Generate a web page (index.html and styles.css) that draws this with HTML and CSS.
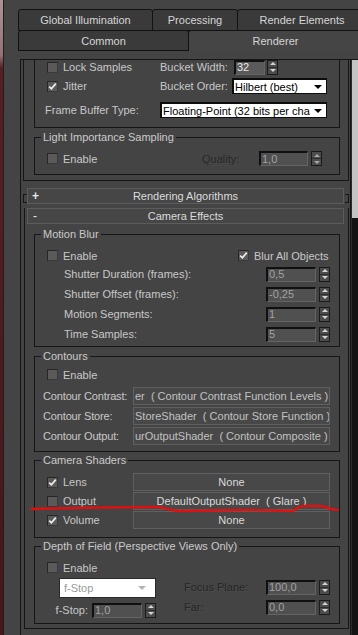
FILE: index.html
```html
<!DOCTYPE html>
<html>
<head>
<meta charset="utf-8">
<link rel="stylesheet" href="styles.css">
</head>
<body>
<div class="edge"></div>
<div class="app">
  <div class="tabs">
    <div class="tabrow row1">
      <div class="tab t-gi">Global Illumination</div>
      <div class="tab t-proc">Processing</div>
      <div class="tab t-re">Render Elements</div>
    </div>
    <div class="tabrow row2">
      <div class="tab t-common">Common</div>
      <div class="tab t-renderer sel">Renderer</div>
    </div>
  </div>
  <div class="scroll">
    <div class="content">
      <div class="rollout first">
        <div class="group cut">
          <div class="srow r1">
            <div class="lcell"><span class="chk"></span><span class="lbl">Lock Samples</span></div>
            <div class="rcell"><span class="lbl w74">Bucket Width:</span><span class="num on w31">32</span><span class="spin"><i class="up"></i><i class="dn"></i></span></div>
          </div>
          <div class="srow r2">
            <div class="lcell"><span class="chk on"><svg width="9" height="9" viewBox="0 0 9 9"><path d="M1.2 4.6 L3.4 6.8 L7.8 1.6" stroke="#eeeeee" stroke-width="1.7" fill="none"/></svg></span><span class="lbl">Jitter</span></div>
            <div class="rcell"><span class="lbl w72">Bucket Order:</span><span class="dd w95"><span class="ddt">Hilbert (best)</span></span></div>
          </div>
          <div class="srow r3">
            <div class="lcell"><span class="lbl pl10">Frame Buffer Type:</span></div>
            <div class="rcell"><span class="dd w167"><span class="ddt">Floating-Point (32 bits per cha</span></span></div>
          </div>
        </div>
        <fieldset class="group lis">
          <legend>Light Importance Sampling</legend>
          <div class="lisrow">
            <div class="lcell w167"><span class="chk"></span><span class="lbl">Enable</span></div>
            <span class="lbl dis w57">Quality:</span><span class="num w49">1,0</span><span class="spin dim"><i class="up"></i><i class="dn"></i></span>
          </div>
        </fieldset>
      </div>

      <div class="rhead collapsed"><span class="sign">+</span><span class="rtitle">Rendering Algorithms</span><span></span></div>

      <div class="rollout open">
        <div class="rhead"><span class="sign minus">-</span><span class="rtitle">Camera Effects</span><span></span></div>

        <fieldset class="group mb">
          <legend>Motion Blur</legend>
          <div class="erow">
            <div class="lcell w203"><span class="chk"></span><span class="lbl">Enable</span></div>
            <span class="chk on"><svg width="9" height="9" viewBox="0 0 9 9"><path d="M1.2 4.6 L3.4 6.8 L7.8 1.6" stroke="#eeeeee" stroke-width="1.7" fill="none"/></svg></span><span class="lbl">Blur All Objects</span>
          </div>
          <div class="nrow"><span class="lbl grow">Shutter Duration (frames):</span><span class="num w50">0,5</span><span class="spin"><i class="up"></i><i class="dn"></i></span></div>
          <div class="nrow"><span class="lbl grow">Shutter Offset (frames):</span><span class="num w50">-0,25</span><span class="spin"><i class="up"></i><i class="dn"></i></span></div>
          <div class="nrow"><span class="lbl grow">Motion Segments:</span><span class="num w50">1</span><span class="spin"><i class="up"></i><i class="dn"></i></span></div>
          <div class="nrow"><span class="lbl grow">Time Samples:</span><span class="num w50">5</span><span class="spin"><i class="up"></i><i class="dn"></i></span></div>
        </fieldset>

        <fieldset class="group ct">
          <legend>Contours</legend>
          <div class="erow"><span class="chk"></span><span class="lbl">Enable</span></div>
          <div class="brow"><span class="lbl w90">Contour Contrast:</span><span class="btn clip">er&nbsp;&nbsp;( Contour Contrast Function Levels )</span></div>
          <div class="brow"><span class="lbl w90">Contour Store:</span><span class="btn clip">StoreShader&nbsp;&nbsp;( Contour Store Function )</span></div>
          <div class="brow"><span class="lbl w90">Contour Output:</span><span class="btn clip">urOutputShader&nbsp;&nbsp;( Contour Composite )</span></div>
        </fieldset>

        <fieldset class="group cs">
          <legend>Camera Shaders</legend>
          <div class="crow"><div class="lcell w98"><span class="chk on"><svg width="9" height="9" viewBox="0 0 9 9"><path d="M1.2 4.6 L3.4 6.8 L7.8 1.6" stroke="#eeeeee" stroke-width="1.7" fill="none"/></svg></span><span class="lbl">Lens</span></div><span class="btn">None</span></div>
          <div class="crow"><div class="lcell w98"><span class="chk"></span><span class="lbl">Output</span></div><span class="btn">DefaultOutputShader&nbsp;&nbsp;( Glare )</span></div>
          <div class="crow"><div class="lcell w98"><span class="chk on"><svg width="9" height="9" viewBox="0 0 9 9"><path d="M1.2 4.6 L3.4 6.8 L7.8 1.6" stroke="#eeeeee" stroke-width="1.7" fill="none"/></svg></span><span class="lbl">Volume</span></div><span class="btn">None</span></div>
        </fieldset>

        <fieldset class="group dof">
          <legend>Depth of Field (Perspective Views Only)</legend>
          <div class="erow"><span class="chk"></span><span class="lbl">Enable</span></div>
          <div class="dofbody">
            <div class="dleft">
              <span class="dd dis w97"><span class="ddt">f-Stop</span></span>
              <div class="fsrow"><span class="lbl">f-Stop:</span><span class="num w50">1,0</span><span class="spin"><i class="up"></i><i class="dn"></i></span></div>
            </div>
            <div class="dright">
              <div class="drow"><span class="lbl dis grow">Focus Plane:</span><span class="num w50">100,0</span><span class="spin"><i class="up"></i><i class="dn"></i></span></div>
              <div class="drow"><span class="lbl dis grow">Far:</span><span class="num w50">0,0</span><span class="spin"><i class="up"></i><i class="dn"></i></span></div>
            </div>
          </div>
        </fieldset>
      </div>
    </div>
    <div class="sbar"><div class="thumb"></div></div>
  </div>
</div>
<svg class="redline" width="358" height="635" viewBox="0 0 358 635"><path d="M32 509 C 70 508, 120 507, 157 507 C 165 507, 170 511, 180 511 L 250 510 L 292 511 C 297 510, 298 506, 304 506 L 320 506 C 328 507, 332 510, 338 510" stroke="#e01010" stroke-width="2.4" fill="none" stroke-linecap="round" stroke-linejoin="round"/></svg>
</body>
</html>
```
FILE: styles.css
```css
* { box-sizing: border-box; }
html, body { margin: 0; padding: 0; }
body {
  width: 358px;
  height: 635px;
  overflow: hidden;
  background: #444444;
  display: flex;
  position: relative;
  font-family: "Liberation Sans", Arial, sans-serif;
  font-size: 11px;
  color: #c8c8c8;
}
.edge {
  width: 4px;
  flex: none;
  border-right: 1px solid #1e1e1e;
  background: linear-gradient(to bottom, #ae9396 0, #957276 55px, #5a1e22 68px, #4a1418 100%);
}
.app { flex: 1; min-width: 0; display: flex; flex-direction: column; }

/* tabs */
.tabs { padding-top: 9px; padding-left: 14px; }
.tabrow { display: flex; }
.row2 { margin-top: -1px; }
.tab {
  flex: none;
  height: 22px;
  margin-right: -1px;
  background: #3a3a3a;
  border: 1px solid #121212;
  border-radius: 3px 3px 0 0;
  color: #d6d6d6;
  display: flex;
  align-items: center;
  justify-content: center;
}
.row2 .tab { height: 21px; }
.t-gi { width: 135px; }
.t-proc { width: 86px; }
.t-re { width: 130px; }
.t-common { width: 171px; }
.t-renderer { width: 175px; }
.tab.sel { background: #454545; border-bottom: none; }

/* scroll area */
.scroll {
  flex: 1;
  min-height: 0;
  margin-top: 8px;
  margin-left: 16px;
  border-top: 1px solid #161616;
  border-left: 1px solid #161616;
  display: flex;
}
.content { flex: 1; min-width: 0; overflow: hidden; border-right: 1px solid #161616; }
.sbar { width: 7px; flex: none; background: #141414; border-left: 1px solid #2c2c2c; }
.thumb { height: 158px; background: #c4c4c4; }

/* rollouts */
.rollout { border: 1px solid #161616; border-top: none; }
.rollout.first { margin: 0 1px 0 2px; padding: 0 8px 5px 10px; }
.rollout.open { margin: 12px 1px 0 3px; padding: 0 8px 4px 9px; }

.rhead {
  position: relative;
  height: 16px;
  border: 1px solid #5c5c5c;
  background: #464646;
  color: #dcdcdc;
  display: grid;
  grid-template-columns: 20px 1fr 20px;
  align-items: center;
  line-height: 14px;
}
.rhead.collapsed { margin: 7px 6px 0 6px; }
.rollout.open > .rhead { margin: -8px -4px 0 -7px; }
.rtitle { text-align: center; }
.sign { padding-left: 4px; font-weight: bold; font-size: 12px; color: #e6e6e6; }
.sign.minus { font-weight: normal; padding-left: 5px; }
.rhead.collapsed::before,
.rhead.collapsed::after {
  content: "";
  position: absolute;
  top: 5px;
  width: 3px;
  height: 7px;
  border: 1px solid #161616;
}
.rhead.collapsed::before { left: -5px; border-right: none; }
.rhead.collapsed::after { right: -6px; border-left: none; }

/* group boxes */
.group { border: 1px solid #161616; margin: 0; padding: 0; min-width: 0; }
.group.cut { border-top: none; padding-bottom: 9px; }
fieldset.group legend {
  margin-left: 6px;
  padding: 0 2px;
  line-height: 13px;
  font-size: 11px;
  color: #cacaca;
}
.lis { margin-top: 3px; padding: 7px 0 8px; }
.mb { margin-top: 4px; padding: 8px 9px 4px 0; }
.ct { margin-top: 3px; padding: 5px 9px 6px 0; }
.cs { margin-top: 2px; padding: 6px 9px 8px 0; }
.dof { margin-top: 2px; padding: 8px 9px 5px 0; }

/* generic items */
.lbl { white-space: nowrap; }
.lbl.dis { color: #272727; text-shadow: 1px 1px 0 rgba(255,255,255,0.06); }
.grow { flex: 1; }
.w57 { width: 57px; flex: none; }
.w72 { width: 72px; flex: none; }
.w74 { width: 74px; flex: none; }
.w90 { width: 90px; flex: none; overflow: hidden; letter-spacing: -0.15px; }
.pl10 { padding-left: 10px; }

.chk {
  width: 11px;
  height: 11px;
  flex: none;
  background: #5a5a5a;
  border: 1px solid #262626;
  border-right-color: #3a3a3a;
  border-bottom-color: #3a3a3a;
  display: flex;
  align-items: center;
  justify-content: center;
  margin-right: 5px;
}
.chk svg { display: block; }

.num {
  flex: none;
  height: 15px;
  background: #505050;
  border-top: 2px solid #101010;
  border-left: 2px solid #101010;
  border-right: 1px solid #646464;
  border-bottom: 1px solid #646464;
  color: #a2a2a2;
  padding-left: 1px;
  display: flex;
  align-items: center;
  line-height: 11px;
}
.num.on { background: #5a5a5a; color: #e8e8e8; }
.w31 { width: 31px; }
.w49 { width: 49px; }
.w50 { width: 50px; }

.spin {
  width: 11px;
  height: 15px;
  flex: none;
  margin-left: 3px;
  border: 1px solid #1a1a1a;
  background: #4c4c4c;
  display: flex;
  flex-direction: column;
}
.r1 .spin { margin-left: 2px; }
.spin i { flex: 1; display: flex; align-items: center; justify-content: center; }
.spin i + i { border-top: 1px solid #2e2e2e; }
.spin i::before { content: ""; border-left: 3px solid transparent; border-right: 3px solid transparent; }
.spin i.up::before { border-bottom: 3px solid #d4d4d4; }
.spin i.dn::before { border-top: 3px solid #d4d4d4; }
.spin.dim i.up::before { border-bottom-color: #a8a8a8; }
.spin.dim i.dn::before { border-top-color: #a8a8a8; }

.dd {
  flex: none;
  height: 16px;
  background: #ffffff;
  border: 1px solid #0c0c0c;
  border-top-width: 2px;
  border-left-width: 2px;
  color: #000000;
  display: flex;
  align-items: center;
  padding-left: 1px;
}
.ddt { flex: 1; min-width: 0; overflow: hidden; white-space: nowrap; }
.dd::after {
  content: "";
  flex: none;
  margin: 0 4px 0 3px;
  border-left: 4px solid transparent;
  border-right: 4px solid transparent;
  border-top: 4px solid #000000;
}
.dd.dis { height: 20px; border: 1px solid #2a2a2a; color: #9a9a9a; padding-left: 4px; }
.dd.dis::after { border-top-color: #b4b4b4; margin-right: 9px; }
.w95 { width: 95px; }
.w97 { width: 97px; }
.w167 { width: 167px; }

.btn {
  flex: none;
  width: 197px;
  height: 18px;
  background: #484848;
  border: 1px solid #606060;
  color: #dadada;
  display: flex;
  align-items: center;
  justify-content: center;
  white-space: nowrap;
  overflow: hidden;
}
.btn.clip { justify-content: flex-start; padding-left: 1px; color: #c2c2c2; }

/* cut group rows */
.srow { display: flex; align-items: center; }
.r1 { height: 14px; }
.r2 { height: 16px; margin-top: 4px; }
.r3 { height: 16px; margin-top: 8px; }
.lcell { display: flex; align-items: center; flex: none; }
.srow .lcell { width: 125px; }
.srow .lcell .chk { margin-left: 12px; }
.rcell { display: flex; align-items: center; }

.lisrow { display: flex; align-items: center; height: 15px; }
.lcell.w167 { width: 167px; }
.lcell.w167 .chk, .lcell.w203 .chk, .lcell.w98 .chk { margin-left: 12px; }
.lcell.w203 { width: 203px; }
.lcell.w98 { width: 98px; }

.erow { display: flex; align-items: center; height: 13px; }
.ct .erow > .chk:first-child, .dof .erow > .chk:first-child { margin-left: 12px; }

.nrow { display: flex; align-items: center; height: 16px; margin-top: 4px; padding-left: 29px; }

.brow { display: flex; align-items: center; height: 18px; margin-top: 2px; padding-left: 8px; }
.ct .erow + .brow { margin-top: 6px; }

.crow { display: flex; align-items: center; height: 18px; margin-top: 1px; }
.crow:first-of-type { margin-top: 0; }

.dofbody { display: flex; margin-top: 4px; }
.dleft { width: 103px; margin-left: 18px; display: flex; flex-direction: column; align-items: flex-end; }
.fsrow { display: flex; align-items: center; height: 16px; margin-top: 4px; }
.fsrow .lbl { margin-right: 4px; }
.dright { flex: 1; margin-left: 28px; margin-top: 1px; }
.drow { display: flex; align-items: center; height: 16px; }
.drow + .drow { margin-top: 4px; }

.redline { position: absolute; left: 0; top: 0; pointer-events: none; }
```
